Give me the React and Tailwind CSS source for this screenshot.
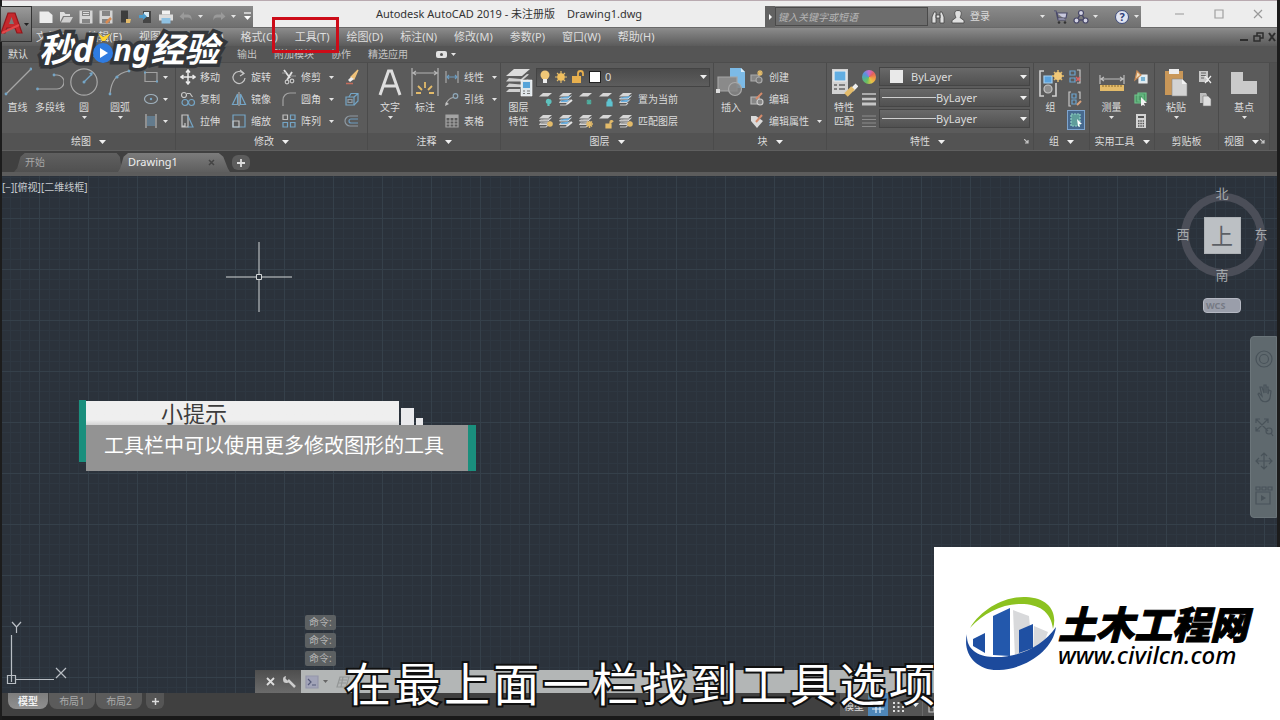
const BLUE = "#74a5c6";
const LIGHT = "#c6c6c6";
const GOLD = "#e3bb6a";

function Svg({ w = 16, h = 16, box, children }) {
  return (
    <svg
      width={w}
      height={h}
      viewBox={box || `0 0 ${w} ${h}`}
      fill="none"
      stroke={LIGHT}
      strokeWidth="1.2"
      className="block shrink-0"
      aria-hidden="true"
    >
      {children}
    </svg>
  );
}

const Caret = () => (
  <Svg w={5} h={3}>
    <path d="M0 0h5L2.500 3z" fill="#e4e4e4" stroke="none" />
  </Svg>
);

const BigCaret = () => (
  <Svg w={7} h={4}>
    <path d="M0 0h7L3.500 4z" fill="#f0f0f0" stroke="none" />
  </Svg>
);

const Launcher = () => (
  <Svg w={5} h={5}>
    <path d="M0 0l4 4M4 1v3H1" />
  </Svg>
);

/* ---- layer stack icon with a small badge ---- */
const badges = {
  bulbOn: <circle cx="12" cy="11" r="2.800" fill={GOLD} stroke="none" />,
  bulbOff: <path d="M11 8.500a2 2 0 1 1 0 4v2h-1v-2a2 2 0 0 1 1-4z" fill="#5fc3bf" stroke="#5fc3bf" />,
  freeze: <path d="M8.500 11h5M11 8.500v5M9 9l4 4M13 9l-4 4" stroke="#4fae9f" />,
  sun: <path d="M8 11h7M11.500 8v7M9 8.500l5 5M14 8.500l-5 5" stroke={GOLD} strokeWidth="1.500" />,
  lock: <path d="M9 11h5v4H9zM10 11V9.500a1.500 1.500 0 0 1 3 0V11" fill="#5fc3d0" stroke="#5fc3d0" />,
  unlock: <path d="M8 11h5v4H8zM12 11V9a1.500 1.500 0 0 1 3 0" fill={GOLD} stroke={GOLD} />,
  pen: <path d="M9 13l5-4" stroke="#e6e6e6" strokeWidth="2" />,
};

function Layers({ badge, single, blue }) {
  return (
    <Svg>
      <path d="M5 2h9l-4 3.500H1z" fill="#d6d6d6" stroke="none" />
      {!single && (
        <>
          <path d="M3 6.500L1.500 8H10l3.500-3.200" fill={blue ? "#69aede" : "#a9a9a9"} stroke="#dadada" strokeWidth="1" />
          <path d="M3 9.500L1.500 11.500H9l3-3" fill={blue ? "#69aede" : "#a9a9a9"} stroke="#d4d4d4" strokeWidth="1" />
          <path d="M2 14h6l2-2" stroke="#c8c8c8" />
        </>
      )}
      {badges[badge]}
    </Svg>
  );
}

const icons = {
  newFile: (
    <Svg>
      <path d="M1.500 2.500h9l4 3.500v8h-13z" fill="#ececec" stroke="none" />
    </Svg>
  ),
  open: (
    <Svg>
      <path d="M2 13V3h4l1.500 2H12v2H5z" fill="#dedede" stroke="none" />
      <path d="M3 13.500L6 8h9l-3 5.500z" fill="#cfcfcf" stroke="none" />
    </Svg>
  ),
  save: (
    <Svg>
      <path d="M1.500 1.500h13v13h-13z" fill="#d4d4d4" stroke="none" />
      <path d="M4 2h8v5H4zM4 10h8v4H4z" fill="#858585" stroke="none" />
      <path d="M5 3.500h6M5 5.500h6" stroke="#ddd" />
    </Svg>
  ),
  saveAs: (
    <Svg>
      <path d="M1.500 1.500h13v13h-13z" fill="#d4d4d4" stroke="none" />
      <path d="M4 2h8v5H4zM4 10h8v4H4z" fill="#858585" stroke="none" />
      <path d="M8 14l5-5" stroke="#d78a52" strokeWidth="2.500" />
    </Svg>
  ),
  device: (
    <Svg>
      <path d="M3 1.500h7v12H3z" fill="#3d3d3d" stroke="none" />
      <path d="M8 10h5l-1 4H8z" fill={GOLD} stroke="none" />
    </Svg>
  ),
  cloud: (
    <Svg>
      <path d="M5 2h8v12H5z" fill="#454545" stroke="none" />
      <path d="M6 3h5v5H6z" fill="#d5e8f2" stroke="none" />
      <path d="M1 6h4V4l4 3.500L5 11V9H1z" fill="#4c9bcb" stroke="none" />
    </Svg>
  ),
  print: (
    <Svg>
      <path d="M4 1.500h8v4H4z" fill="#f2f2f2" stroke="none" />
      <path d="M1 5.500h14v6H1z" fill="#dcdcdc" stroke="none" />
      <path d="M3.500 9h9v5.500h-9z" fill="#8fc1e2" stroke="none" />
    </Svg>
  ),
  undo: (
    <Svg>
      <path d="M6 3L1.500 7.500 6 11V8.500h4c2 0 3 1 3.500 3 .5-4-1-6-4-6H6z" fill="#9a9a9a" stroke="none" />
    </Svg>
  ),
  redo: (
    <Svg>
      <path d="M10 3l4.500 4.500L10 11V8.500H6c-2 0-3 1-3.500 3-.5-4 1-6 4-6H10z" fill="#9a9a9a" stroke="none" />
    </Svg>
  ),
  rect: (
    <Svg>
      <path d="M2 3.500h12v9H2z" stroke="#a2a2a2" />
      <path d="M1 2.500h2v2H1zM13 11.500h2v2h-2z" fill={BLUE} stroke="none" />
    </Svg>
  ),
  ellipse: (
    <Svg>
      <ellipse cx="8" cy="8" rx="6.500" ry="4.500" stroke="#9fb0bc" />
      <circle cx="8" cy="8" r="1.200" fill={BLUE} stroke="none" />
    </Svg>
  ),
  hatch: (
    <Svg>
      <path d="M3 1v14M13 1v14" stroke="#b5b5b5" />
      <path d="M4 4h8M4 6h8M4 8h8M4 10h8M4 12h8" stroke="#6c9cc0" />
    </Svg>
  ),
  move: (
    <Svg>
      <path d="M8 1v14M1 8h14M6 3.500L8 1l2 2.500M6 12.500L8 15l2-2.500M3.500 6L1 8l2.500 2M12.500 6L15 8l-2.500 2" stroke="#ececec" strokeWidth="1.500" />
    </Svg>
  ),
  copy: (
    <Svg>
      <circle cx="4" cy="4" r="2.500" />
      <circle cx="5" cy="11.500" r="3" stroke={BLUE} />
      <circle cx="11.500" cy="11.500" r="3" stroke={BLUE} />
      <path d="M7 2.500h3l2.500 3.500" />
    </Svg>
  ),
  stretch: (
    <Svg>
      <path d="M2 2h6v12H2zM5 10v3H2" />
      <path d="M8 3l5 11H8" stroke={BLUE} />
    </Svg>
  ),
  rotate: (
    <Svg>
      <path d="M12.500 4.500A6 6 0 1 0 14 9" />
      <path d="M9 1l4 3.500-4 2.500" />
    </Svg>
  ),
  mirror: (
    <Svg>
      <path d="M6.500 3v10.500h-5z" stroke={BLUE} />
      <path d="M9.500 3v10.500h5z" stroke={BLUE} />
      <path d="M8 1v14" stroke="#aaa" />
    </Svg>
  ),
  scale: (
    <Svg>
      <path d="M2 2h12v12H2z" stroke={BLUE} />
      <path d="M2 8h6v6H2z" />
    </Svg>
  ),
  trim: (
    <Svg>
      <path d="M3 1l6 8M11 3L6 11" strokeWidth="1.800" stroke="#e2e2e2" />
      <circle cx="6" cy="13" r="1.800" />
      <circle cx="11" cy="12" r="1.800" />
      <path d="M1 4h4M10 7h5" stroke="#999" />
    </Svg>
  ),
  fillet: (
    <Svg>
      <path d="M2 15V9c0-4 3-7 7-7h6" stroke="#a2a2a2" />
    </Svg>
  ),
  array: (
    <Svg>
      <path d="M2 2h4.500v4.500H2z" stroke="#bdbdbd" />
      <path d="M9.500 2H14v4.500H9.500zM2 9.500h4.500V14H2zM9.500 9.500H14V14H9.500z" stroke={BLUE} />
    </Svg>
  ),
  erase: (
    <Svg>
      <path d="M14 1L7 8l3 2z" fill="#efc27a" stroke="#efc27a" />
      <path d="M7 8l-3 3 2 2 4-3z" fill="#eee" stroke="none" />
      <path d="M2 14.500h7" stroke="#c46c5c" strokeWidth="1.500" />
    </Svg>
  ),
  box: (
    <Svg>
      <path d="M2 6h8v8H2z" stroke={BLUE} />
      <path d="M5 6L7 2.500h7V10l-4 4M10 6l4-3.500" stroke={BLUE} />
      <path d="M4 8.500h4v3H4z" stroke="#8f9aa3" />
    </Svg>
  ),
  offset: (
    <Svg>
      <path d="M14 3H6a5 5 0 0 0 0 10h8" stroke="#8f9aa3" />
      <path d="M14 6H7a2 2 0 0 0 0 4h7" stroke="#6c9cc0" />
    </Svg>
  ),
  linear: (
    <Svg>
      <path d="M2 2v12M14 2v12" stroke="#a7a7a7" />
      <path d="M3 8h10M5 6L3 8l2 2M11 6l2 2-2 2" stroke="#6c9cc0" />
    </Svg>
  ),
  leader: (
    <Svg>
      <path d="M2 13C4 8 6 7 9 6.500" stroke="#a9a9a9" />
      <circle cx="11.500" cy="5" r="2.300" stroke="#8fa9bb" />
      <path d="M1 15l1-4 3 2z" fill={LIGHT} stroke="none" />
    </Svg>
  ),
  table: (
    <Svg>
      <path d="M2 2h12v12H2zM2 8h12M2 11h12M6 5v9M10 5v9" stroke="#a4a4a4" />
      <path d="M2 2h12v3H2z" fill="#a4a4a4" stroke="none" />
    </Svg>
  ),
  create: (
    <Svg>
      <path d="M2 6h8v6H2z" fill="#868686" stroke="#a9a9a9" />
      <circle cx="10" cy="11" r="3" fill="#777" stroke="#aaa" />
      <path d="M11 1v6M8 4h6M9 2l4 4M13 2L9 6" stroke={GOLD} />
    </Svg>
  ),
  edit: (
    <Svg>
      <path d="M2 6h8v7H2z" fill="#868686" stroke="#b9b9b9" />
      <circle cx="11" cy="11" r="3" fill="#888" stroke="#ccc" />
      <path d="M7 8l6-6" stroke="#d58a6a" strokeWidth="2" />
    </Svg>
  ),
  attr: (
    <Svg>
      <path d="M2 3h5l7 5-6 7-6-7z" fill="#dadada" stroke="none" />
      <path d="M7 9l6-7" stroke="#d58a6a" strokeWidth="2" />
    </Svg>
  ),
  weights: (
    <Svg>
      <path d="M1 3h14" strokeWidth="1.500" />
      <path d="M1 8h14" strokeWidth="2.500" />
      <path d="M1 13h14" strokeWidth="3" />
    </Svg>
  ),
  linetype: (
    <Svg>
      <path d="M1 3h14M1 6.500h14M1 10h14M1 13.500h14" stroke="#8b8b8b" />
    </Svg>
  ),
  ungroup: (
    <Svg>
      <path d="M3 2h5v4H3zM3 9h5v4H3z" stroke="#6aa3cf" />
      <path d="M10 1h3v13h-3" />
      <path d="M9 8l4 4M13 8l-4 4" stroke="#d86161" strokeWidth="1.500" />
    </Svg>
  ),
  groupEdit: (
    <Svg>
      <path d="M4 1H2v14h2M11 1h2v7" />
      <path d="M5 3h4v4H5zM5 9h4v4H5z" stroke="#6aa3cf" />
      <path d="M10 14l4-4" stroke="#d9a27c" strokeWidth="2" />
    </Svg>
  ),
  groupSel: (
    <Svg>
      <path d="M3 2h9v12H3z" fill="#5f9d9b" stroke="#8fd0c6" strokeDasharray="2 1" />
      <path d="M9 7l5 5h-3l1 3-2-1z" fill="#fff" stroke="none" />
    </Svg>
  ),
  quickSel: (
    <Svg>
      <path d="M6 6h8v8H6z" fill="#dcebf2" stroke="#eee" />
      <path d="M8 8h4v4H8z" fill="#7ab3d3" stroke="none" />
      <path d="M2 11l2-9 4 4z" fill="#f1dcb8" stroke="#c98b55" />
    </Svg>
  ),
  selAll: (
    <Svg>
      <path d="M2 4h8v8H2zM5 2h8v8H5z" fill="#4f9a68" stroke="#6fc58b" />
      <path d="M8 6l6 6h-3l1 3-2-1-2 1z" fill="#f2f2f2" stroke="none" />
    </Svg>
  ),
  calc: (
    <Svg>
      <path d="M3 1h10v14H3z" fill="#d4d4d4" stroke="none" />
      <path d="M5 3h6v2H5z" fill="#555" stroke="none" />
      <path d="M5 8h6M5 10.500h6M5 13h6" stroke="#555" strokeWidth="1.300" strokeDasharray="1.500 .8" />
    </Svg>
  ),
  cut: (
    <Svg>
      <path d="M2 2h9v11H2z" fill="#c9c9c9" stroke="none" />
      <path d="M4 4h5M4 6.500h5M4 9h3" stroke="#666" />
      <path d="M8 7l6 7M14 7l-6 7" stroke="#eee" />
    </Svg>
  ),
  copyClip: (
    <Svg>
      <path d="M3 2h6l1 2v8H3z" fill="#bdbdbd" stroke="none" />
      <path d="M6 5h5l3 3v7H6z" fill="#dedede" stroke="#777" strokeWidth=".6" />
    </Svg>
  ),
};

const big = {
  line: (
    <Svg w={28} h={30}>
      <path d="M2 27L27 2" stroke="#a6a6a6" />
      <circle cx="27" cy="2" r="1.400" fill={BLUE} stroke="none" />
      <circle cx="2" cy="27" r="1.400" fill={BLUE} stroke="none" />
    </Svg>
  ),
  polyline: (
    <Svg w={28} h={30}>
      <path d="M1 22h20a7 7 0 0 0 0-14h-3" stroke="#a6a6a6" />
      <circle cx="1.500" cy="22" r="1.400" fill={BLUE} stroke="none" />
      <circle cx="18" cy="8" r="1.400" fill={BLUE} stroke="none" />
    </Svg>
  ),
  circle: (
    <Svg w={28} h={30}>
      <circle cx="14" cy="15" r="13.200" stroke="#a9a9a9" />
      <path d="M14 15l8-8" stroke={BLUE} />
      <circle cx="14" cy="15" r="1.500" fill={BLUE} stroke="none" />
      <path d="M23 5l-1 4-3-3z" fill={BLUE} stroke="none" />
    </Svg>
  ),
  arc: (
    <Svg w={28} h={30}>
      <path d="M4 27C5 14 11 6 23 4" stroke="#a6a6a6" />
      <circle cx="4" cy="27" r="1.400" fill={BLUE} stroke="none" />
      <circle cx="11" cy="10" r="1.600" fill={BLUE} stroke="none" />
      <circle cx="23" cy="4" r="1.400" fill={BLUE} stroke="none" />
    </Svg>
  ),
  text: (
    <Svg w={28} h={30}>
      <path d="M4 28L12.500 4h3L24 28M7.500 19h13" stroke="#dedede" strokeWidth="3" />
    </Svg>
  ),
  dim: (
    <Svg w={28} h={30}>
      <path d="M1 1v28M27 1v28M2 6h24M5 4L2 6l3 2M23 4l3 2-3 2" stroke="#b4b4b4" />
      <path d="M14 15v6M7 19l4 4M21 19l-4 4M5 26h5M18 26h5" stroke={GOLD} strokeWidth="1.800" />
    </Svg>
  ),
  layers: (
    <Svg w={28} h={30}>
      <path d="M9 2h16l-8 7H1z" fill="#dcdcdc" stroke="none" />
      <path d="M4 11l-3 3.500h15l8-7-2-.5-6 5z" fill="#cfcfcf" stroke="none" />
      <path d="M4 16.500L1 20h15l8-7-2-.5-6 5z" fill="#cfcfcf" stroke="none" />
      <path d="M4 22l-3 3h14v-3z" fill="#cfcfcf" stroke="none" />
      <path d="M16 13h11v16H16z" fill="#dfe6ea" stroke="#fff" strokeWidth=".6" />
      <path d="M18 15h7v6h-7z" fill="#57a4d9" stroke="none" />
      <path d="M18 24h2M22 24h3M18 26.500h2M22 26.500h3" stroke="#777" />
    </Svg>
  ),
  insert: (
    <Svg w={30} h={30}>
      <path d="M14 1h11l4 4v16H14z" fill="#7cbae6" stroke="none" />
      <path d="M25 1v4h4z" fill="#d6ecfa" stroke="none" />
      <path d="M2 10h19v14H2z" fill="#8a8a8a" stroke="#a5a5a5" />
      <circle cx="19" cy="22" r="6.500" fill="#858585" fillOpacity=".85" stroke="#a9a9a9" />
      <path d="M0 22h4v4H0z" fill="#ddd" stroke="none" />
    </Svg>
  ),
  match: (
    <Svg w={28} h={30}>
      <path d="M2 2h16v25H2z" fill="#d2d2d2" stroke="none" />
      <path d="M4 4h12v10H4z" fill="#62aee2" stroke="#eee" />
      <path d="M4 18h3M9 18h6M4 22h3M9 22h6" stroke="#666" strokeWidth="1.600" />
      <path d="M27 18l-5 5" stroke="#eee" strokeWidth="4" />
      <path d="M23 21l-7 7" stroke={GOLD} strokeWidth="5" />
    </Svg>
  ),
  group: (
    <Svg w={28} h={30}>
      <path d="M7 4H3v25h4M15 29h4V16" stroke="#cfcfcf" strokeWidth="1.600" />
      <path d="M7 9h8v7H7z" fill="#5aa2dd" stroke="#a6d0f0" />
      <circle cx="11" cy="22" r="4" fill="#8d8d8d" stroke="#c5c5c5" />
      <path d="M21 3v12M15 9h12M17 5l8 8M25 5l-8 8" stroke={GOLD} strokeWidth="1.500" />
      <circle cx="21" cy="9" r="4" fill="#f0c878" stroke="none" />
    </Svg>
  ),
  measure: (
    <Svg w={28} h={30}>
      <path d="M2 8v9M26 8v9M3 12h22M6 10l-3 2 3 2M22 10l3 2-3 2" stroke="#bdbdbd" />
      <path d="M2 18h24v6H2z" fill={GOLD} stroke="none" />
      <path d="M5 18v2M8 18v2M11 18v2M14 18v2M17 18v2M20 18v2M23 18v2" stroke="#8b6a2b" strokeWidth="1" />
    </Svg>
  ),
  paste: (
    <Svg w={28} h={30}>
      <path d="M3 4h18v24H3z" fill="#c99758" stroke="none" />
      <path d="M7 2h10v5H7z" fill="#ededed" stroke="none" />
      <path d="M10 12h10l5 5v12H10z" fill="#d3d3d3" stroke="#888" strokeWidth=".6" />
      <path d="M20 12v5h5z" fill="#f2f2f2" stroke="none" />
    </Svg>
  ),
  base: (
    <Svg w={28} h={30}>
      <path d="M1 5h12v9h14v13H1z" fill="#cacaca" stroke="none" />
    </Svg>
  ),
};

function BigTool({ icon, label, second, caret, className }) {
  return (
    <button type="button" className={`flex shrink-0 flex-col items-center pt-px ${className}`}>
      {big[icon]}
      <span className="mt-[3px] leading-[14px] whitespace-nowrap">{label}</span>
      {second && <span className="leading-[14px] whitespace-nowrap">{second}</span>}
      {caret && (
        <span className="mt-[2px]">
          <Caret />
        </span>
      )}
    </button>
  );
}

function Tool({ icon, label, caret }) {
  return (
    <button type="button" aria-label={label || icon} className="flex h-[22px] items-center gap-1 whitespace-nowrap">
      {icons[icon]}
      {label && <span>{label}</span>}
      {caret && (
        <span className={label ? "ml-1" : ""}>
          <Caret />
        </span>
      )}
    </button>
  );
}

const Column = ({ className = "", children }) => (
  <div className={`flex shrink-0 flex-col items-start ${className}`}>{children}</div>
);

function Panel({ title, caret = true, launcher, className, children }) {
  return (
    <section
      className={`flex shrink-0 flex-col border-r border-[#4b4b4b] bg-[#5b5b5b] ${className}`}
    >
      <div className="flex h-[70px] pt-[3px]">{children}</div>
      <footer className="flex h-[17px] items-center bg-[#535353] px-1">
        <div className="flex flex-1 items-center justify-center gap-2 whitespace-nowrap">
          {title}
          {caret && <BigCaret />}
        </div>
        {launcher && <Launcher />}
      </footer>
    </section>
  );
}

function PropertySelect({ label, kind }) {
  return (
    <div className="relative flex h-[19px] items-center border border-[#454545] bg-linear-to-b from-[#696969] to-[#515151]">
      <select
        aria-label={label}
        className={`h-full w-full appearance-none bg-transparent text-[11px] leading-4 outline-none ${
          kind === "color" ? "pl-[31px]" : "pl-[56px]"
        }`}
      >
        <option>ByLayer</option>
      </select>
      {kind === "color" ? (
        <span className="pointer-events-none absolute left-[10px] size-[13px] bg-[#e9e9e9]" />
      ) : (
        <span className="pointer-events-none absolute left-[2px] h-px w-[54px] bg-[#cfcfcf]" />
      )}
      <span className="pointer-events-none absolute right-[2px]">
        <BigCaret />
      </span>
    </div>
  );
}

function Ribbon() {
  return (
    <div className="flex overflow-hidden border-t border-[#4d4d4d] bg-[#505050] text-[10px] text-[#dcdcdc]">
      <Panel title="绘图" className="w-[174px]">
        <BigTool icon="line" label="直线" className="w-[31px]" />
        <BigTool icon="polyline" label="多段线" className="w-[34px]" />
        <BigTool icon="circle" label="圆" caret className="w-[34px]" />
        <BigTool icon="arc" label="圆弧" caret className="w-[38px]" />
        <Column className="pl-1">
          <Tool icon="rect" caret />
          <Tool icon="ellipse" caret />
          <Tool icon="hatch" caret />
        </Column>
      </Panel>

      <Panel title="修改" className="w-[192px]">
        <Column className="w-[51px] ml-1">
          <Tool icon="move" label="移动" />
          <Tool icon="copy" label="复制" />
          <Tool icon="stretch" label="拉伸" />
        </Column>
        <Column className="w-[50px]">
          <Tool icon="rotate" label="旋转" />
          <Tool icon="mirror" label="镜像" />
          <Tool icon="scale" label="缩放" />
        </Column>
        <Column className="w-[63px]">
          <Tool icon="trim" label="修剪" caret />
          <Tool icon="fillet" label="圆角" caret />
          <Tool icon="array" label="阵列" caret />
        </Column>
        <Column>
          <Tool icon="erase" />
          <Tool icon="box" />
          <Tool icon="offset" />
        </Column>
      </Panel>

      <Panel title="注释" className="w-[133px]">
        <BigTool icon="text" label="文字" caret className="ml-1 w-9" />
        <BigTool icon="dim" label="标注" className="w-[34px]" />
        <Column className="ml-[2px]">
          <Tool icon="linear" label="线性" caret />
          <Tool icon="leader" label="引线" caret />
          <Tool icon="table" label="表格" />
        </Column>
      </Panel>

      <Panel title="图层" className="w-[213px]">
        <BigTool icon="layers" label="图层" second="特性" className="w-[35px]" />
        <div className="flex flex-1 flex-col pr-[3px]">
          <div className="flex h-[22px] items-center">
            <div className="relative flex h-[19px] flex-1 items-center border border-[#444] bg-linear-to-b from-[#4c4c4c] to-[#5d5d5d]">
              <select
                aria-label="图层"
                className="h-full w-full appearance-none bg-transparent pl-[68px] text-[11px] leading-4 outline-none"
              >
                <option>0</option>
              </select>
              <span className="pointer-events-none absolute left-[2px] flex items-center gap-1">
                <Svg w={12} h={14}>
                  <circle cx="6" cy="5" r="4.500" fill="#f0c878" stroke="none" />
                  <path d="M4 9h4v4H4z" fill="#eee" stroke="none" />
                </Svg>
                <Svg w={12} h={14}>
                  <path d="M6 1v12M0 7h12M2 3l8 8M10 3l-8 8" stroke={GOLD} />
                  <circle cx="6" cy="7" r="3.800" fill="#f0bf5e" stroke="none" />
                </Svg>
                <Svg w={14} h={14}>
                  <path d="M1 6h9v7H1z" fill="#e8b04e" stroke="none" />
                  <path d="M7 6V3.500a2.500 2.500 0 0 1 5 0V6" stroke="#e8b04e" strokeWidth="1.800" />
                </Svg>
                <span className="size-[12px] border border-[#222] bg-white" />
              </span>
              <span className="pointer-events-none absolute right-[2px]">
                <BigCaret />
              </span>
            </div>
          </div>
          {[
            ["置为当前", ["bulbOff", "pen", "freeze", "lock", ""]],
            ["匹配图层", ["bulbOn", "pen", "sun", "unlock", "bulbOn"]],
          ].map(([label, row], r) => (
            <div key={label} className="flex h-[22px] items-center gap-1 pl-[2px]">
              {row.map((b, i) => (
                <button key={i} type="button" aria-label={`${label}-${b}`}>
                  <Layers
                    badge={b}
                    single={(r === 0 && [0, 2, 3].includes(i)) || (r === 1 && i === 3)}
                    blue={i === 1 || (r === 0 && i === 4)}
                  />
                </button>
              ))}
              <span>{label}</span>
            </div>
          ))}
        </div>
      </Panel>

      <Panel title="块" className="w-[113px]">
        <BigTool icon="insert" label="插入" className="w-[34px]" />
        <Column className="ml-[1px]">
          <Tool icon="create" label="创建" />
          <Tool icon="edit" label="编辑" />
          <Tool icon="attr" label="编辑属性" caret />
        </Column>
      </Panel>

      <Panel title="特性" launcher className="w-[207px]">
        <BigTool icon="match" label="特性" second="匹配" className="w-[34px]" />
        <Column>
          <button type="button" aria-label="颜色" className="flex h-[22px] w-4 items-center justify-center">
            <span className="size-[14px] rounded-full bg-[conic-gradient(#c76bd0,#e4605a,#f09a45,#e3c54a,#6bbf5e,#4fb0a0,#5b8fe0,#c76bd0)]" />
          </button>
          <Tool icon="weights" />
          <Tool icon="linetype" />
        </Column>
        <div className="flex flex-1 flex-col gap-[2px] pt-px pr-[3px] pl-[2px]">
          <PropertySelect label="对象颜色" kind="color" />
          <PropertySelect label="线宽" />
          <PropertySelect label="线型" />
        </div>
      </Panel>

      <Panel title="组" className="w-[56px]">
        <BigTool icon="group" label="组" className="w-[33px]" />
        <Column>
          <Tool icon="ungroup" />
          <Tool icon="groupEdit" />
          <span className="border border-[#7fa5cf] bg-[#47698f] [&_button]:h-[18px]">
            <Tool icon="groupSel" />
          </span>
        </Column>
      </Panel>

      <Panel title="实用工具" className="w-[65px]">
        <BigTool icon="measure" label="测量" caret className="w-[43px]" />
        <Column>
          <Tool icon="quickSel" />
          <Tool icon="selAll" />
          <Tool icon="calc" />
        </Column>
      </Panel>

      <Panel title="剪贴板" caret={false} className="w-[64px]">
        <BigTool icon="paste" label="粘贴" caret className="w-[42px]" />
        <Column>
          <Tool icon="cut" />
          <Tool icon="copyClip" />
        </Column>
      </Panel>

      <Panel title="视图" launcher className="w-[51px]">
        <BigTool icon="base" label="基点" caret className="w-full" />
      </Panel>
    </div>
  );
}

function TitleBar() {
  return (
    <header className="flex h-[27px] items-stretch border-t border-[#b9aab0] bg-[#ededed] text-[11px] text-[#333]">
      <div className="mt-[5px] ml-[30px] flex w-[221px] shrink-0 items-center gap-1 bg-linear-to-b from-[#8b8b8b] to-[#6f6f6f] pl-[6px]">
        {["newFile", "open", "save", "saveAs", "device", "cloud", "print", "undo"].map((name) => (
          <button key={name} type="button" aria-label={name}>
            {icons[name]}
          </button>
        ))}
        <Caret />
        <button type="button" aria-label="redo" className="ml-1">
          {icons.redo}
        </button>
        <Caret />
        <span className="ml-1">
          <Svg w={7} h={9}>
            <path d="M0 1h7" stroke="#fff" />
            <path d="M0 4h7L3.500 8z" fill="#fff" stroke="none" />
          </Svg>
        </span>
      </div>

      <h1 className="flex flex-1 items-center justify-center gap-3 whitespace-nowrap">
        <span>Autodesk AutoCAD 2019 - 未注册版</span>
        <span>Drawing1.dwg</span>
      </h1>

      <div className="mt-[5px] flex w-[376px] shrink-0 items-center bg-linear-to-b from-[#8b8b8b] to-[#707070]">
        <span className="flex h-full w-[10px] items-center justify-center bg-[#626262]">
          <Svg w={3} h={6}>
            <path d="M0 0v6l3-3z" fill="#fff" stroke="none" />
          </Svg>
        </span>
        <input
          aria-label="搜索"
          placeholder="键入关键字或短语"
          className="h-[19px] w-[153px] border border-[#4a4a4a] bg-[#6d6d6d] px-[2px] text-[10px] italic outline-none placeholder:text-[#b5b5b5]"
        />
        <span className="ml-[2px]">
          <Svg>
            <path d="M2 14V8l2-5h2v11zM14 14V8l-2-5h-2v11zM6 6h4v3H6z" fill="#e0e0e0" stroke="#444" strokeWidth=".8" />
          </Svg>
        </span>
        <button type="button" className="ml-1 flex items-center gap-1 text-[10px] text-[#dadada]">
          <Svg>
            <path d="M8 1.500c5 0 3 5 2 7l4 3v2.500H2V11.500l4-3c-1-2-3-7 2-7z" fill="#e0e0e0" stroke="#444" strokeWidth=".8" />
          </Svg>
          登录
        </button>
        <span className="flex-1" />
        <Caret />
        <span className="ml-2">
          <Svg>
            <path d="M1 2h2l2 9h8M4 4h10l-1 5H5z" fill="#c8c8dc" stroke="#484868" />
            <circle cx="6" cy="13.500" r="1.300" fill="#333" stroke="none" />
            <circle cx="12" cy="13.500" r="1.300" fill="#333" stroke="none" />
          </Svg>
        </span>
        <span className="mr-1 ml-1">
          <Svg>
            <path d="M8 4L4 11h8z" stroke="#484868" strokeWidth="1.500" />
            <circle cx="8" cy="4" r="2.500" fill="#d5d5e6" stroke="#484868" />
            <circle cx="3.500" cy="11.500" r="2.500" fill="#d5d5e6" stroke="#484868" />
            <circle cx="12.500" cy="11.500" r="2.500" fill="#d5d5e6" stroke="#484868" />
          </Svg>
        </span>
        <Caret />
        <button
          type="button"
          aria-label="帮助"
          className="mr-[5px] ml-[17px] flex size-[14px] items-center justify-center rounded-full border border-[#3f4c7c] bg-[#dfe3f0] text-[11px] leading-3 font-bold text-[#2d3c78]"
        >
          ?
        </button>
        <span className="mr-[2px]">
          <Caret />
        </span>
      </div>

      <div className="flex w-[136px] shrink-0 items-center justify-around pl-5">
        <button type="button" aria-label="最小化">
          <Svg w={10} h={10}>
            <path d="M0 5h9" stroke="#a5a5a5" />
          </Svg>
        </button>
        <button type="button" aria-label="最大化">
          <Svg w={10} h={10}>
            <path d="M1 1h8v8H1z" stroke="#a0a0a0" />
          </Svg>
        </button>
        <button type="button" aria-label="关闭">
          <Svg w={10} h={10}>
            <path d="M1 1l8 8M9 1L1 9" stroke="#999" />
          </Svg>
        </button>
      </div>
    </header>
  );
}

const menus = [
  "文件(F)",
  "编辑(E)",
  "视图(V)",
  "插入(I)",
  "格式(O)",
  "工具(T)",
  "绘图(D)",
  "标注(N)",
  "修改(M)",
  "参数(P)",
  "窗口(W)",
  "帮助(H)",
];

function MenuBar() {
  return (
    <nav className="flex h-[19px] items-center gap-[17px] border-t border-[#6a6a6a] bg-linear-to-b from-[#8c8c8c] to-[#5b5b5b] pl-[34px] text-[11px] text-[#dedede]">
      {menus.map((m) => (
        <button key={m} type="button" className="relative whitespace-nowrap">
          {m}
          {m === "工具(T)" && (
            <span className="pointer-events-none absolute -top-3 -left-[23px] z-20 h-9 w-[67px] border-3 border-[#cc0c18]" />
          )}
        </button>
      ))}
      <div className="ml-auto flex items-center gap-1">
        <Svg w={9} h={10}>
          <path d="M0 8h8" stroke="#2e2e2e" strokeWidth="2" />
        </Svg>
        <Svg w={11} h={10}>
          <path d="M1 4h6v5H1zM4 4V1h6v5H7" stroke="#2e2e2e" strokeWidth="1.500" />
        </Svg>
        <Svg w={9} h={10}>
          <path d="M1 1l6 8M7 1L1 9" stroke="#2e2e2e" strokeWidth="2" />
        </Svg>
      </div>
    </nav>
  );
}

function RibbonTabs() {
  return (
    <nav className="flex h-4 items-center bg-[#555] pl-[6px] text-[10px] text-[#c4c4c4]">
      <button type="button" className="w-[34px] text-left text-[#dedede]">
        默认
      </button>
      <div className="flex items-center gap-[17px]">
        {["插入", "注释", "参数化", "视图", "管理", "输出", "附加模块", "协作", "精选应用"].map((t) => (
          <button key={t} type="button" className="whitespace-nowrap">
            {t}
          </button>
        ))}
      </div>
      <span className="ml-7 flex h-[7px] w-[11px] items-center justify-center rounded-xs bg-[#e2e2e2]">
        <span className="size-[3px] rounded-full bg-[#555]" />
      </span>
      <span className="ml-1">
        <Caret />
      </span>
    </nav>
  );
}

function FileTabs() {
  return (
    <nav className="flex h-[26px] items-end border-t border-b-4 border-t-[#5f5f5f] border-b-[#5c5c5c] bg-[#404040] pl-3 text-[11px]">
      <button
        type="button"
        className="h-[19px] w-[108px] bg-linear-to-b from-[#606060] to-[#505050] pl-[11px] text-left text-[10px] text-[#a8a8a8] [clip-path:polygon(0_100%,3%_80%,6%_20%,10%_0,95%_0,98%_20%,100%_100%)]"
      >
        开始
      </button>
      <button
        type="button"
        className="-ml-1 flex h-[19px] w-[112px] items-center justify-between bg-linear-to-b from-[#7c7c7c] to-[#5e5e5e] pr-[15px] pl-[10px] text-[#eee] [clip-path:polygon(0_100%,2%_80%,5%_20%,9%_0,90%_0,94%_20%,98%_80%,100%_100%)]"
      >
        Drawing1
        <Svg w={7} h={7}>
          <path d="M1 1l5 5M6 1L1 6" stroke="#444" strokeWidth="1.500" />
        </Svg>
      </button>
      <button
        type="button"
        aria-label="新图形"
        className="mb-[2px] ml-[2px] flex h-[15px] w-[18px] items-center justify-center rounded-md bg-[#5c5c5c]"
      >
        <Svg w={8} h={8}>
          <path d="M4 0v8M0 4h8" stroke="#ddd" strokeWidth="1.800" />
        </Svg>
      </button>
    </nav>
  );
}

function Grid() {
  return (
    <svg className="absolute inset-0 size-full" aria-hidden="true">
      <defs>
        <pattern id="grid" x="37" y="42" width="49" height="51" patternUnits="userSpaceOnUse">
          <path d="M10.500 0v51M20.500 0v51M30.500 0v51M39.500 0v51M0 10.500h49M0 20.500h49M0 30.500h49M0 41.500h49" stroke="#2e3741" />
          <path d="M.5 0v51M0 .5h49" stroke="#35404a" />
        </pattern>
      </defs>
      <rect width="100%" height="100%" fill="url(#grid)" />
    </svg>
  );
}

function ViewCube() {
  return (
    <div className="absolute top-2 right-2 flex flex-col items-center text-[13px] text-[#a4a8ac]">
      <div className="relative grid h-[102px] w-[94px] grid-cols-[16px_1fr_16px] grid-rows-[20px_1fr_20px] place-items-center">
        <span className="absolute top-[9px] left-[6px] size-[84px] rounded-full border-8 border-[#4b4e58]" />
        <span className="relative col-start-2">北</span>
        <span className="relative col-start-1 row-start-2">西</span>
        <button
          type="button"
          className="relative col-start-2 row-start-2 size-[37px] border border-[#aeb2b6] bg-[#bcc0c4] text-[22px] leading-8 text-[#5c6066]"
        >
          上
        </button>
        <span className="relative col-start-3 row-start-2">东</span>
        <span className="relative col-start-2 row-start-3">南</span>
      </div>
      <button
        type="button"
        className="mt-3 h-[15px] w-[38px] rounded-sm border border-[#b5b8c2] bg-[#9a9eaa] pl-[2px] text-left text-[9px] leading-3 font-bold text-[#767a85]"
      >
        WCS
      </button>
    </div>
  );
}

function NavBar() {
  return (
    <div className="absolute top-[160px] right-0 flex h-[182px] w-[27px] flex-col items-center justify-between rounded-l-sm border border-[#6b757a] bg-[#5f696e] pt-3 pb-3">
      <Svg w={20} h={20}>
        <circle cx="10" cy="10" r="8" stroke="#49535a" />
        <circle cx="10" cy="10" r="4.500" stroke="#49535a" />
      </Svg>
      <Svg w={20} h={20}>
        <path d="M4 11l3 6c3 3 8 2 9-2l1-7-2-1-1 4V4h-2v6-8h-2v8L8 4H6l2 9-3-3z" stroke="#49535a" />
      </Svg>
      <Svg w={20} h={20}>
        <path d="M2 2l12 12M14 2L2 14M2 6V2h4M10 2h4v4M2 10v4h4" stroke="#49535a" />
        <circle cx="15" cy="14" r="3" stroke="#49535a" />
        <path d="M17 16l2 3" stroke="#49535a" />
      </Svg>
      <Svg w={20} h={20}>
        <path d="M10 2v16M2 10h16M5 7l-3 3 3 3M15 7l3 3-3 3M7 5l3-3 3 3M7 15l3 3 3-3" stroke="#49535a" />
      </Svg>
      <Svg w={20} h={20}>
        <path d="M2 7h14v12H2zM2 2h4v3H2zM8 2h4v3H8zM14 2h4v3h-4z" stroke="#49535a" />
        <path d="M7 10v6l5-3z" fill="#49535a" stroke="none" />
      </Svg>
    </div>
  );
}

function Tip() {
  return (
    <aside className="absolute top-[224px] left-[77px] flex">
      <span className="h-[62px] w-[7px] bg-[#1a8f7d]" />
      <div className="flex flex-col">
        <div className="flex items-end">
          <h2 className="mt-px h-[27px] w-[313px] bg-linear-to-b from-[#efefef] from-70% to-[#c4c4c4] pl-[75px] text-[22px] leading-6 text-[#3c3c3c]">
            小提示
          </h2>
          <span className="ml-[2px] h-5 w-[13px] bg-[#e9e9ec]" />
          <span className="ml-[2px] h-[10px] w-[7px] bg-[#e9e9ec]" />
        </div>
        <div className="-mt-[3px] flex">
          <p className="h-[46px] w-[382px] bg-[#939393] pl-[18px] text-[20px] leading-[42px] whitespace-nowrap text-white">
            工具栏中可以使用更多修改图形的工具
          </p>
          <span className="w-2 bg-[#1a8f7d]" />
        </div>
      </div>
    </aside>
  );
}

function CommandLine() {
  return (
    <div className="absolute right-0 bottom-0 left-[253px]">
      <ul className="mb-1 ml-[50px] flex w-[31px] flex-col gap-[3px] text-[10px] leading-[15px] text-[#b4b4b4]">
        {[1, 2, 3].map((n) => (
          <li key={n} className="rounded-xs bg-[#5c6062] pl-1 whitespace-nowrap">
            命令:
          </li>
        ))}
      </ul>
      <div className="flex h-[23px]">
        <div className="flex w-[46px] items-center justify-end gap-2 bg-linear-to-b from-[#4e4e4e] to-[#6b6b6b] pr-1">
          <button type="button" aria-label="关闭命令行">
            <Svg w={9} h={9}>
              <path d="M1 1l7 7M8 1L1 8" stroke="#ddd" strokeWidth="1.800" />
            </Svg>
          </button>
          <button type="button" aria-label="自定义">
            <Svg w={14} h={14}>
              <path d="M5 5l7 7" stroke="#ccc" strokeWidth="2.500" />
              <path d="M3 1a3.500 3.500 0 1 0 4 4L5 6 2.500 3.500z" fill="#ccc" stroke="none" />
            </Svg>
          </button>
        </div>
        <div className="flex flex-1 items-center gap-1 bg-[#b3b6b6] pl-1">
          <Svg w={14} h={14}>
            <path d="M1 1h12v12H1z" fill="#a2a4b8" stroke="#9496aa" />
            <path d="M3 4l3 3-3 3M7 10h4" stroke="#555a78" />
          </Svg>
          <Svg w={5} h={3}>
            <path d="M0 0h5L2.500 3z" fill="#666" stroke="none" />
          </Svg>
          <input aria-label="命令" className="peer order-2 flex-1 bg-transparent text-[12px] outline-none" />
          <span className="ml-1">
            <Svg w={14} h={12}>
              <path d="M4 1h9l-3 10H1zM3 4h8M2 7h8M7 1L5 11" stroke="#939696" />
            </Svg>
          </span>
        </div>
      </div>
    </div>
  );
}

function Canvas() {
  return (
    <main className="relative min-h-[517px] flex-1 overflow-hidden bg-[#2b323b]">
      <Grid />
      <p className="absolute top-1 left-0 text-[10px] leading-[14px] text-[#c9ccd0]">[−][俯视][二维线框]</p>
      <div className="absolute top-[66px] left-[224px]">
        <Svg w={66} h={70}>
          <path d="M0 35h30M36 35h30M33 0v32M33 38v32M30.500 32.500h5v5h-5z" stroke="#d3d6d8" strokeWidth="1" />
        </Svg>
      </div>
      <div className="absolute bottom-[6px] left-1">
        <Svg w={64} h={66}>
          <path d="M5.500 14v47M9 58.500h39" stroke="#b9bec4" />
          <path d="M1.500 54.500h8v8h-8z" stroke="#b9bec4" />
          <path d="M6 1l4.500 5L15 1M10.500 6v6M50 47l10 10M60 47L50 57" stroke="#b9bec4" />
        </Svg>
      </div>
      <ViewCube />
      <NavBar />
      <Tip />
      <CommandLine />
    </main>
  );
}

function StatusBar() {
  return (
    <footer className="flex h-[27px] items-start border-b-4 border-[#191919] bg-[#404040] pl-[6px] text-[10px] text-[#a9a9a9]">
      <button
        type="button"
        className="h-4 w-10 rounded-b-lg bg-linear-to-b from-[#7d7d7d] to-[#909090] font-bold text-[#f1f1f1]"
      >
        模型
      </button>
      <button type="button" className="ml-px h-4 w-[46px] rounded-b-lg bg-[#5b5b5b]">
        布局1
      </button>
      <button type="button" className="ml-px h-4 w-[46px] rounded-b-lg bg-[#5b5b5b]">
        布局2
      </button>
      <button
        type="button"
        aria-label="新建布局"
        className="ml-1 flex h-4 w-[18px] items-center justify-center rounded-b-md bg-[#555]"
      >
        <Svg w={7} h={7}>
          <path d="M3.500 0v7M0 3.500h7" stroke="#ddd" strokeWidth="1.500" />
        </Svg>
      </button>
      <div className="mr-[335px] ml-auto flex h-full items-stretch bg-[#555] text-[#ddd]">
        <button type="button" className="px-1 pt-1">
          模型
        </button>
        <button type="button" aria-label="栅格" className="flex w-5 items-center justify-center bg-[#4f87b8] pt-1">
          <Svg w={12} h={12}>
            <path d="M4 0v12M8 0v12M0 4h12M0 8h12" stroke="#dfeefa" />
          </Svg>
        </button>
        <button type="button" aria-label="捕捉" className="flex w-5 items-center justify-center pt-1">
          <Svg w={12} h={12}>
            <path d="M1 2h11M1 6h11M1 10h11" stroke="#ddd" strokeWidth="1.800" strokeDasharray="2 2.500" />
          </Svg>
        </button>
        <span className="flex w-[14px] items-center justify-center">
          <BigCaret />
        </span>
        <span className="flex w-5 items-center justify-center border-l border-[#6a6a6a] pt-1">
          <Svg w={12} h={12}>
            <path d="M2 0v11h10M2 6h5v5" />
          </Svg>
        </span>
      </div>
    </footer>
  );
}

function ExperienceLogo() {
  return (
    <div className="pointer-events-none absolute top-[29px] left-[39px] z-30 flex h-10 items-center text-[34px] leading-10 font-bold text-white italic [-webkit-text-stroke:7px_#33363a] [paint-order:stroke]">
      <span>秒</span>
      <span>d</span>
      <span className="relative z-10 mx-[-1px]">
        <Svg w={22} h={34}>
          <path d="M6 1l5 4 8-4-6 8h-3z" fill="#ffd42e" stroke="#33363a" strokeWidth=".5" />
          <circle cx="11" cy="21" r="10" fill="#2f7be0" stroke="none" />
          <path d="M8 16v10l8-5z" fill="#fff" stroke="none" />
        </Svg>
      </span>
      <span className="text-[31px]">ng</span>
      <span>经验</span>
    </div>
  );
}

function AppButton() {
  return (
    <button
      type="button"
      aria-label="应用程序菜单"
      className="absolute top-[6px] left-0 z-20 flex h-9 w-8 items-center justify-between border border-[#333] bg-linear-to-b from-[#9a9a9a] to-[#606060] pr-[2px]"
    >
      <Svg w={23} h={28}>
        <path d="M0 23L7 3h7l7 20h-5l-2-5H6l-2 5z" fill="#c5282c" stroke="#93171c" />
        <path d="M8 14h5L10.500 7z" fill="#7c7c7c" stroke="none" />
        <path d="M1 23L18 15" stroke="#e0484a" strokeWidth="2" />
      </Svg>
      <Svg w={5} h={3}>
        <path d="M0 0h5L2.500 3z" fill="#222" stroke="none" />
      </Svg>
    </button>
  );
}

const CAPTION = "在最上面一栏找到工具选项";

function Caption() {
  return (
    <p className="pointer-events-none absolute bottom-[9px] left-[345px] z-30 flex w-[590px] justify-between text-[46px] leading-[56px] text-white [-webkit-text-stroke:4px_#101010] [paint-order:stroke]">
      {[...CAPTION].map((c, i) => (
        <span key={i}>{c}</span>
      ))}
    </p>
  );
}

function SiteBadge() {
  return (
    <a
      href="#civilcn"
      className="absolute right-0 bottom-0 z-40 flex h-[173px] w-[346px] items-center bg-white pl-8 text-black"
    >
      <Svg w={92} h={76}>
        <path d="M4 32C16 12 40 0 60 1c22 1 32 14 27 32C85 15 72 8 55 8 36 8 18 17 4 32z" fill="#8cc220" stroke="none" />
        <path d="M47 14l16 6 3 34-17 8z" fill="#d8d9db" stroke="none" />
        <path d="M68 30l14 6-6 16-9 6z" fill="#d8d9db" stroke="none" />
        <path d="M7 43l12-6v20l-12-7z" fill="#1f50a3" stroke="none" />
        <path d="M27 20l17-8v48l-17-1z" fill="#2358ac" stroke="none" />
        <path d="M53 34l14-6v24l-14 5z" fill="#1f50a3" stroke="none" />
        <path d="M1 38c-1 14 9 22 26 23 26 1 50-11 63-30-3 24-31 42-57 43C11 75-4 58 1 38z" fill="#1c4a9c" stroke="none" />
      </Svg>
      <span className="flex flex-col pt-1 italic">
        <span className="text-[38px] leading-[38px] font-black whitespace-nowrap [-webkit-text-stroke:1px_#000]">
          土木工程网
        </span>
        <span className="text-[24px] leading-[24px] font-medium">www.civilcn.com</span>
      </span>
    </a>
  );
}

export default function App() {
  return (
    <div className="relative overflow-hidden font-['Noto_Sans','Noto_Sans_CJK_SC',sans-serif]">
      <div className="flex min-h-screen flex-col border-r-3 border-l-2 border-[#1c1c1c] bg-[#404040]">
        <TitleBar />
        <MenuBar />
        <RibbonTabs />
        <Ribbon />
        <FileTabs />
        <Canvas />
        <StatusBar />
      </div>
      <AppButton />
      <ExperienceLogo />
      <Caption />
      <SiteBadge />
    </div>
  );
}
